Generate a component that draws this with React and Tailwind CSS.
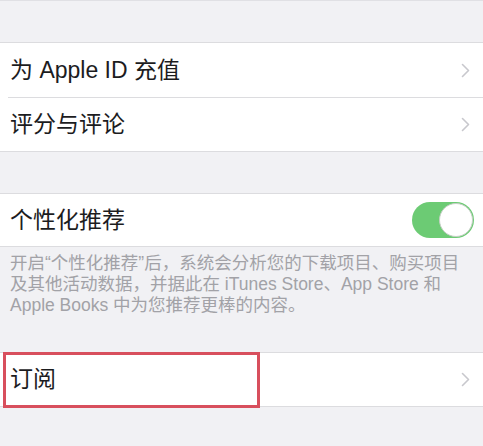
export default function App() {
  const font = { fontFamily: '"Liberation Sans", "Noto Sans CJK SC", sans-serif' };
  const Chevron = () => (
    <svg width="9" height="15" viewBox="0 0 9 15" className="shrink-0">
      <path d="M1.5 1.5 L7.5 7.5 L1.5 13.5" fill="none" stroke="#c8c8cd" strokeWidth="1.6" strokeLinecap="round" strokeLinejoin="round" />
    </svg>
  );
  return (
    <div className="w-[483px] h-[446px] bg-[#f1f1f4] overflow-hidden border-t border-[#e0e0e4]" style={font}>
      <div className="h-[41px]" />
      <div className="bg-white border-y border-[#dcdcdf]">
        <div className="h-[54px] flex items-center justify-between pl-[10px] pr-[13px]">
          <span className="text-[23px] text-[#1c1c1e] leading-none">为 Apple ID 充值</span>
          <Chevron />
        </div>
        <div className="ml-[8px] h-px bg-[#dcdcdf]" />
        <div className="h-[53px] flex items-center justify-between pl-[10px] pr-[13px]">
          <span className="text-[23px] text-[#1c1c1e] leading-none">评分与评论</span>
          <Chevron />
        </div>
      </div>
      <div className="h-[41px]" />
      <div className="bg-white border-y border-[#dcdcdf]">
        <div className="h-[52px] flex items-center justify-between pl-[10px] pr-[9px]">
          <span className="text-[23px] text-[#1c1c1e] leading-none">个性化推荐</span>
          <div className="w-[62px] h-[36px] rounded-full bg-[#6ccb74] relative">
            <div className="absolute right-[1px] top-[1px] w-[34px] h-[34px] rounded-full bg-white border border-[#c6cfc6]" />
          </div>
        </div>
      </div>
      <div className="pl-[10px] pr-[6px] pt-[6px] text-[17.5px] leading-[21px] text-[#a2a2a7] whitespace-nowrap">
        <p>开启“个性化推荐”后，系统会分析您的下载项目、购买项目</p>
        <p>及其他活动数据，并据此在 iTunes Store、App Store 和</p>
        <p>Apple Books 中为您推荐更棒的内容。</p>
      </div>
      <div className="h-[36px]" />
      <div className="bg-white border-y border-[#dcdcdf] relative">
        <div className="h-[53px] flex items-center justify-between pl-[10px] pr-[13px]">
          <span className="text-[23px] text-[#1c1c1e] leading-none">订阅</span>
          <Chevron />
        </div>
        <div className="absolute left-[3px] top-[-1px] w-[257px] h-[56px] border-[3px] border-[#d84f5d]" />
      </div>
    </div>
  );
}
